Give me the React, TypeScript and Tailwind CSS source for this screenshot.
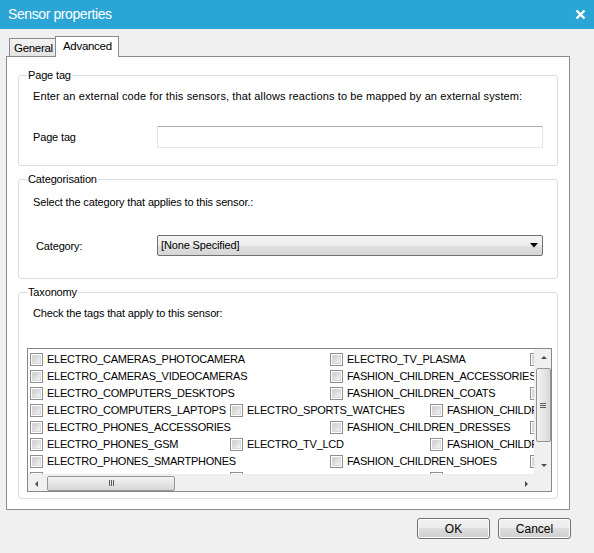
import React from "react";

type Cell = { label: string; span: number };

const rows: Cell[][] = [
  [
    { label: "ELECTRO_CAMERAS_PHOTOCAMERA", span: 3 },
    { label: "ELECTRO_TV_PLASMA", span: 2 },
    { label: "FASHION_CHILDREN_BAGS", span: 2 },
  ],
  [
    { label: "ELECTRO_CAMERAS_VIDEOCAMERAS", span: 3 },
    { label: "FASHION_CHILDREN_ACCESSORIES", span: 3 },
  ],
  [
    { label: "ELECTRO_COMPUTERS_DESKTOPS", span: 3 },
    { label: "FASHION_CHILDREN_COATS", span: 2 },
    { label: "FASHION_CHILDREN_HATS", span: 2 },
  ],
  [
    { label: "ELECTRO_COMPUTERS_LAPTOPS", span: 2 },
    { label: "ELECTRO_SPORTS_WATCHES", span: 2 },
    { label: "FASHION_CHILDREN_BOOTS", span: 2 },
  ],
  [
    { label: "ELECTRO_PHONES_ACCESSORIES", span: 3 },
    { label: "FASHION_CHILDREN_DRESSES", span: 2 },
    { label: "FASHION_CHILDREN_SOCKS", span: 2 },
  ],
  [
    { label: "ELECTRO_PHONES_GSM", span: 2 },
    { label: "ELECTRO_TV_LCD", span: 2 },
    { label: "FASHION_CHILDREN_JEANS", span: 2 },
  ],
  [
    { label: "ELECTRO_PHONES_SMARTPHONES", span: 3 },
    { label: "FASHION_CHILDREN_SHOES", span: 2 },
    { label: "FASHION_CHILDREN_TOYS", span: 2 },
  ],
  [
    { label: "ELECTRO_SPORTS_BIKES", span: 2 },
    { label: "ELECTRO_TV_LED", span: 2 },
    { label: "FASHION_CHILDREN_SHIRTS", span: 2 },
  ],
];

const spanW: Record<number, string> = {
  1: "w-[100px]",
  2: "w-[200px]",
  3: "w-[300px]",
};

function CheckBox() {
  return (
    <span className="w-[13px] h-[13px] shrink-0 border border-[#8e8f8f] bg-white p-[1px] flex">
      <span className="flex-1 border border-[#d8d8d8] bg-gradient-to-br from-[#cbcbcb] to-[#f4f4f4]" />
    </span>
  );
}

function Thumb({ vertical }: { vertical?: boolean }) {
  return (
    <div
      className={
        vertical
          ? "w-[15px] h-[74px] mx-auto rounded-[2px] border border-[#959595] bg-gradient-to-r from-[#f3f3f3] to-[#d8d8d8] flex flex-col items-center justify-center gap-[1px]"
          : "h-[15px] w-[128px] my-auto rounded-[2px] border border-[#959595] bg-gradient-to-b from-[#f3f3f3] to-[#d8d8d8] flex items-center justify-center gap-[1px]"
      }
    >
      {[0, 1, 2].map((i) => (
        <span
          key={i}
          className={vertical ? "w-[6px] h-[1px] bg-[#5a5a5a]" : "w-[1px] h-[6px] bg-[#5a5a5a]"}
        />
      ))}
    </div>
  );
}

function Arrow({ dir }: { dir: "up" | "down" | "left" | "right" }) {
  const pts =
    dir === "up"
      ? "1,5 4,2 7,5"
      : dir === "down"
      ? "1,2 4,5 7,2"
      : dir === "left"
      ? "5,1 2,4 5,7"
      : "3,1 6,4 3,7";
  return (
    <div className="w-[17px] h-[17px] shrink-0 flex items-center justify-center">
      <svg width="8" height="8" viewBox="0 0 8 8">
        <polygon points={pts} fill="#4d4d4d" />
      </svg>
    </div>
  );
}

function Button({ children }: { children: React.ReactNode }) {
  return (
    <div className="w-[73px] h-[21px] rounded-[3px] border border-[#707070] bg-[linear-gradient(#f2f2f2_0%,#ebebeb_50%,#dddddd_50%,#cfcfcf_100%)] shadow-[inset_0_0_0_1px_#fcfcfc] flex items-center justify-center text-[12px] tracking-normal text-black">
      {children}
    </div>
  );
}

export default function App() {
  return (
    <div className="w-[594px] h-[553px] bg-[#f0f0f0] flex flex-col overflow-hidden font-['Liberation_Sans',Arial,sans-serif] text-[11px] tracking-[-0.15px] text-black">
      {/* Title bar */}
      <div className="h-[29px] shrink-0 bg-[#2ba5d6] flex items-center justify-between pl-[8px] pr-[8px]">
        <span className="text-white text-[14px] tracking-[-0.4px]">Sensor properties</span>
        <svg width="11" height="11" viewBox="0 0 11 11">
          <path d="M1.5 1.5 L9.5 9.5 M9.5 1.5 L1.5 9.5" stroke="#fff" strokeWidth="2.4" />
        </svg>
      </div>

      {/* Tabs + panel */}
      <div className="pl-[6px] pt-[7px]">
        <div className="flex items-end h-[20px] pl-[3px]">
          <div className="w-[47px] h-[18px] border border-b-0 border-[#898c95] bg-gradient-to-b from-[#f2f2f2] to-[#e3e3e3] pl-[4px] pt-[2px] flex items-center text-[11.5px] tracking-[-0.3px]">
            General
          </div>
          <div className="relative w-[64px] h-[21px] mb-[-1px] border border-b-0 border-[#898c95] bg-white -ml-px pl-[7px] flex items-start pt-[1px] text-[11.5px] tracking-[-0.3px]">
            Advanced
          </div>
        </div>
        <div className="w-[564px] h-[454px] border border-[#898c95] bg-white pl-[11px] pt-[11px]">
          {/* Page tag */}
          <fieldset className="w-[540px] border border-[#d5dfe5] rounded-[3px] px-[8px] pb-[17px]">
            <legend className="px-[1px] leading-[14px]">Page tag</legend>
            <div className="pl-[6px] mt-[7px] leading-[14px] tracking-[0.12px] whitespace-nowrap">
              Enter an external code for this sensors, that allows reactions to be mapped by an external system:
            </div>
            <div className="flex items-center pl-[6px] mt-[23px] h-[22px]">
              <span className="w-[124px]">Page tag</span>
              <div className="w-[386px] h-[22px] border border-[#e2e3ea] border-t-[#abadb3] border-b-[#e3e9ef] bg-white" />
            </div>
          </fieldset>

          {/* Categorisation */}
          <fieldset className="w-[540px] mt-[6px] border border-[#d5dfe5] rounded-[3px] px-[8px] pb-[22px]">
            <legend className="px-[1px] leading-[14px]">Categorisation</legend>
            <div className="pl-[6px] mt-[9px] leading-[14px]">Select the category that applies to this sensor.:</div>
            <div className="flex items-center pl-[6px] mt-[26px] h-[21px]">
              <span className="w-[124px] pl-[3px] pt-[2px]">Category:</span>
              <div className="w-[386px] h-[21px] rounded-[2px] border border-[#707070] bg-[linear-gradient(#f4f4f4_0%,#ececec_50%,#e0e0e0_50%,#d6d6d6_100%)] flex items-center justify-between pl-[3px] pr-[4px]">
                <span>[None Specified]</span>
                <svg width="8" height="5" viewBox="0 0 8 5">
                  <polygon points="0,0 8,0 4,4.5" fill="#000" />
                </svg>
              </div>
            </div>
          </fieldset>

          {/* Taxonomy */}
          <fieldset className="w-[540px] mt-[6px] border border-[#d5dfe5] rounded-[3px] pl-[8px] pr-[5px] pb-[6px]">
            <legend className="px-[1px] leading-[14px]">Taxonomy</legend>
            <div className="pl-[6px] mt-[7px] leading-[14px]">Check the tags that apply to this sensor:</div>
            <div className="mt-[28px] w-[525px] h-[144px] border border-[#828790] bg-white flex flex-col">
              <div className="flex h-[125px]">
                <div className="w-[506px] h-[125px] overflow-hidden pt-[2px] flex flex-col">
                  {rows.map((r, i) => (
                    <div key={i} className="flex flex-nowrap h-[17px] shrink-0">
                      {r.map((c, j) => (
                        <div
                          key={j}
                          className={`${spanW[c.span]} shrink-0 h-[17px] flex items-center pl-[2px] gap-[4px] whitespace-nowrap text-[11px] tracking-[-0.25px]`}
                        >
                          <CheckBox />
                          <span>{c.label}</span>
                        </div>
                      ))}
                    </div>
                  ))}
                </div>
                <div className="w-[17px] h-[125px] bg-[#f0f0f0] border-l border-[#ececec] flex flex-col">
                  <Arrow dir="up" />
                  <div className="h-[2px]" />
                  <Thumb vertical />
                  <div className="flex-1" />
                  <Arrow dir="down" />
                </div>
              </div>
              <div className="flex h-[17px]">
                <div className="w-[506px] h-[17px] bg-[#f0f0f0] border-t border-[#ececec] flex">
                  <Arrow dir="left" />
                  <div className="w-[2px]" />
                  <Thumb />
                  <div className="flex-1" />
                  <Arrow dir="right" />
                </div>
                <div className="w-[17px] h-[17px] bg-[#f0f0f0]" />
              </div>
            </div>
          </fieldset>
        </div>
      </div>

      {/* Buttons */}
      <div className="flex justify-end gap-[8px] pr-[23px] pt-[8px]">
        <Button>OK</Button>
        <Button>Cancel</Button>
      </div>
    </div>
  );
}
